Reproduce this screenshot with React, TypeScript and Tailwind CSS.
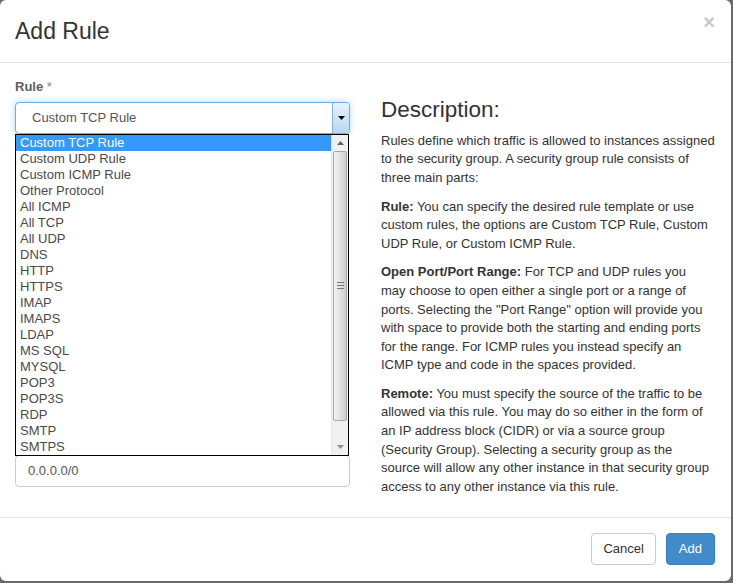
import React from "react";

const items = [
  "Custom TCP Rule",
  "Custom UDP Rule",
  "Custom ICMP Rule",
  "Other Protocol",
  "All ICMP",
  "All TCP",
  "All UDP",
  "DNS",
  "HTTP",
  "HTTPS",
  "IMAP",
  "IMAPS",
  "LDAP",
  "MS SQL",
  "MYSQL",
  "POP3",
  "POP3S",
  "RDP",
  "SMTP",
  "SMTPS",
];

function Lines({ lines }: { lines: React.ReactNode[] }) {
  return (
    <>
      {lines.map((l, i) => (
        <span key={i} className="block whitespace-nowrap">
          {l}
        </span>
      ))}
    </>
  );
}

export default function App() {
  return (
    <div
      className="w-[733px] h-[583px] bg-[#6a6a6a] overflow-hidden"
      style={{ fontFamily: '"Liberation Sans", Arial, Helvetica, sans-serif' }}
    >
      <div className="w-[731px] h-[581px] bg-white rounded-[6px] flex flex-col text-[#333]">
        {/* Header */}
        <div className="h-[63px] border-b border-[#e5e5e5] flex justify-between px-[15px] shrink-0">
          <h3 className="text-[23px] leading-[26px] pt-[18px] font-normal text-[#333]">Add Rule</h3>
          <span className="text-[20px] font-bold leading-none text-[#c8c8c8] pt-[12px] pr-[1px]">×</span>
        </div>

        {/* Body */}
        <div className="flex-1 flex px-[15px] pt-[15px] gap-[31px]">
          {/* Left column */}
          <div className="w-[335px] shrink-0">
            <div className="text-[13px] leading-[18.6px] font-bold text-[#5e5e5e] mb-[5px]">
              Rule <span className="font-normal text-[#888]">*</span>
            </div>
            <div className="relative">
              <div className="h-[32px] rounded-[4px] border border-[#66afe9] shadow-[0_0_6px_rgba(102,175,233,0.5)] flex bg-white">
                <div className="flex-1 flex items-center pl-[16px] text-[13px] text-[#555]">Custom TCP Rule</div>
                <div className="w-[17px] border-l border-[#7fb2de] bg-gradient-to-b from-[#e8f3fc] to-[#b4d8f3] flex items-center justify-center rounded-r-[3px]">
                  <svg width="7" height="4" viewBox="0 0 7 4">
                    <path d="M0 0 L7 0 L3.5 4 Z" fill="#000" />
                  </svg>
                </div>
              </div>

              {/* Open listbox overlay */}
              <div className="absolute left-0 top-[32px] w-[334px] h-[322px] border border-black bg-white flex z-10">
                <div className="flex-1 flex flex-col">
                  {items.map((it, i) => (
                    <div
                      key={it}
                      className={
                        i === 0
                          ? "h-[16px] leading-[16px] text-[13px] pl-[4px] bg-[#3399ff] text-white"
                          : "h-[16px] leading-[16px] text-[13px] pl-[4px] text-[#4a4a4a]"
                      }
                    >
                      {it}
                    </div>
                  ))}
                </div>
                {/* scrollbar */}
                <div className="w-[17px] bg-[#f0f0f0] flex flex-col border-l border-[#e6e6e6]">
                  <div className="h-[16px] flex items-center justify-center">
                    <svg width="7" height="4" viewBox="0 0 7 4">
                      <path d="M3.5 0 L7 4 L0 4 Z" fill="#606060" />
                    </svg>
                  </div>
                  <div className="mx-[1px] h-[270px] rounded-[2px] border border-[#a8a8a8] bg-gradient-to-r from-[#f2f2f2] via-[#e2e2e2] to-[#cdcdcd] flex items-center justify-center">
                    <div className="flex flex-col gap-[2px]">
                      <div className="w-[7px] h-[1px] bg-[#777]" />
                      <div className="w-[7px] h-[1px] bg-[#777]" />
                      <div className="w-[7px] h-[1px] bg-[#777]" />
                    </div>
                  </div>
                  <div className="flex-1" />
                  <div className="h-[16px] flex items-center justify-center">
                    <svg width="7" height="4" viewBox="0 0 7 4">
                      <path d="M0 0 L7 0 L3.5 4 Z" fill="#909090" />
                    </svg>
                  </div>
                </div>
              </div>

              <div className="mt-[321px] h-[32px] rounded-[4px] border border-[#ccc] flex items-center pl-[12px] text-[13px] text-[#555]">
                0.0.0.0/0
              </div>
            </div>
          </div>

          {/* Right column */}
          <div className="w-[335px] shrink-0 text-[13px] leading-[18.6px] text-[#333]">
            <h3 className="text-[22.5px] leading-[1.1] font-normal mt-[20px] mb-[9px]">Description:</h3>
            <p className="mb-[10px]">
              <Lines
                lines={[
                  "Rules define which traffic is allowed to instances assigned",
                  "to the security group. A security group rule consists of",
                  "three main parts:",
                ]}
              />
            </p>
            <p className="mb-[10px]">
              <Lines
                lines={[
                  <>
                    <b>Rule:</b> You can specify the desired rule template or use
                  </>,
                  "custom rules, the options are Custom TCP Rule, Custom",
                  "UDP Rule, or Custom ICMP Rule.",
                ]}
              />
            </p>
            <p className="mb-[10px]">
              <Lines
                lines={[
                  <>
                    <b>Open Port/Port Range:</b> For TCP and UDP rules you
                  </>,
                  "may choose to open either a single port or a range of",
                  'ports. Selecting the "Port Range" option will provide you',
                  "with space to provide both the starting and ending ports",
                  "for the range. For ICMP rules you instead specify an",
                  "ICMP type and code in the spaces provided.",
                ]}
              />
            </p>
            <p className="mb-[10px]">
              <Lines
                lines={[
                  <>
                    <b>Remote:</b> You must specify the source of the traffic to be
                  </>,
                  "allowed via this rule. You may do so either in the form of",
                  "an IP address block (CIDR) or via a source group",
                  "(Security Group). Selecting a security group as the",
                  "source will allow any other instance in that security group",
                  "access to any other instance via this rule.",
                ]}
              />
            </p>
          </div>
        </div>

        {/* Footer */}
        <div className="h-[64px] border-t border-[#e5e5e5] flex justify-end items-start pt-[15px] pr-[16px] gap-[10px] shrink-0">
          <button className="h-[32px] px-[11px] rounded-[4px] border border-[#ccc] bg-white text-[13px] text-[#333]">
            Cancel
          </button>
          <button className="h-[32px] px-[12px] rounded-[4px] border border-[#357ebd] bg-[#428bca] text-[13px] text-white">
            Add
          </button>
        </div>
      </div>
    </div>
  );
}
